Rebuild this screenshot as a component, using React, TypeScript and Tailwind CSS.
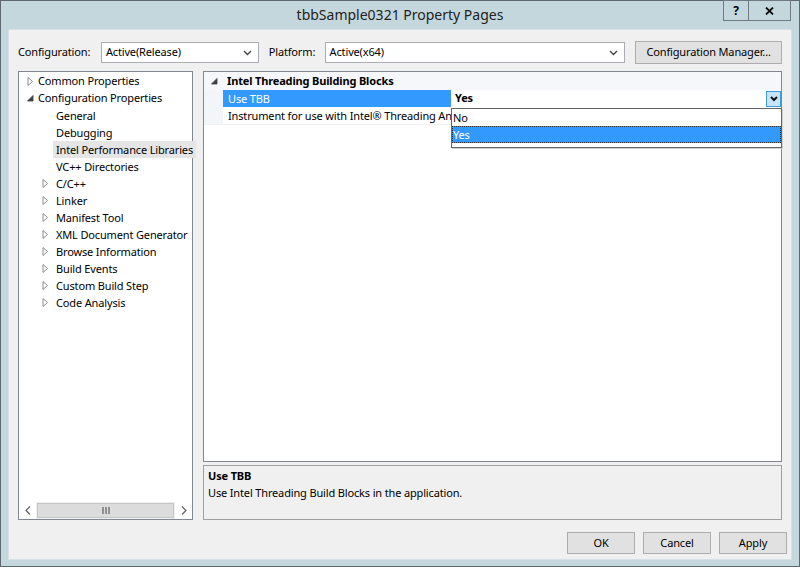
import React from 'react'

const FONT = { fontFamily: '"Noto Sans", "Segoe UI", sans-serif' }

function Chevron({ className = '' }: { className?: string }) {
  return (
    <svg width="9" height="6" viewBox="0 0 9 6" className={className}>
      <path d="M1 1 L4.5 4.5 L8 1" fill="none" stroke="currentColor" strokeWidth="1.4" />
    </svg>
  )
}

function Collapsed() {
  return (
    <svg width="7" height="9" viewBox="0 0 7 9">
      <path d="M1 0.5 L5.5 4.5 L1 8.5 Z" fill="white" stroke="#8c8c8c" strokeWidth="1" />
    </svg>
  )
}

function Expanded() {
  return (
    <svg width="7" height="7" viewBox="0 0 7 7">
      <path d="M6 0.5 L6 6 L0.5 6 Z" fill="#404040" stroke="#404040" strokeWidth="0.8" />
    </svg>
  )
}

const children = [
  { label: 'General', expandable: false },
  { label: 'Debugging', expandable: false },
  { label: 'Intel Performance Libraries', expandable: false, selected: true },
  { label: 'VC++ Directories', expandable: false },
  { label: 'C/C++', expandable: true },
  { label: 'Linker', expandable: true },
  { label: 'Manifest Tool', expandable: true },
  { label: 'XML Document Generator', expandable: true },
  { label: 'Browse Information', expandable: true },
  { label: 'Build Events', expandable: true },
  { label: 'Custom Build Step', expandable: true },
  { label: 'Code Analysis', expandable: true },
]

function Select({ value, width }: { value: string; width: string }) {
  return (
    <div className={`${width} h-[21px] bg-white border border-[#abadb3] flex items-center pl-[4px] pr-[6px]`}>
      <span className="flex-1">{value}</span>
      <Chevron className="text-[#444]" />
    </div>
  )
}

function Button({ label, className = '' }: { label: string; className?: string }) {
  return (
    <div className={`h-[22px] bg-[#e1e1e1] border border-[#adadad] flex items-center justify-center ${className}`}>
      {label}
    </div>
  )
}

export default function App() {
  return (
    <div className="w-[800px] h-[569px] bg-white overflow-hidden text-[11px] tracking-[-0.15px] text-black" style={FONT}>
      <div className="h-[567px] bg-[#c4d7dd] border border-[#5d6873] flex flex-col">
        {/* title bar */}
        <div className="h-[28px] relative flex items-center justify-center shrink-0">
          <span className="text-[14px] tracking-normal text-[#222] mt-[-2px]">tbbSample0321 Property Pages</span>
          <div className="absolute top-[-1px] right-[8px] flex">
            <div className="w-[26px] h-[21px] border border-[#6f7a84] flex items-center justify-center font-bold text-[12px]">?</div>
            <div className="w-[42px] h-[21px] border border-l-0 border-[#6f7a84] flex items-center justify-center">
              <svg width="9" height="8" viewBox="0 0 9 8">
                <path d="M1 0.5 L8 7.5 M8 0.5 L1 7.5" stroke="#111" strokeWidth="1.8" />
              </svg>
            </div>
          </div>
        </div>

        {/* client */}
        <div className="flex-1 mx-[7px] mb-[6px] bg-[#f0f0f0] border border-[#d5e1e5] flex flex-col px-[9px] pt-[11px]">
          {/* config row */}
          <div className="flex items-center h-[23px]">
            <span className="w-[83px]">Configuration:</span>
            <Select value="Active(Release)" width="w-[158px]" />
            <span className="w-[56px] ml-[10px]">Platform:</span>
            <Select value="Active(x64)" width="w-[301px]" />
            <Button label="Configuration Manager..." className="w-[147px] h-[23px] ml-[10px]" />
          </div>

          {/* main */}
          <div className="flex mt-[7px] h-[449px] gap-[10px]">
            {/* tree */}
            <div className="w-[175px] bg-white border border-[#828790] flex flex-col">
              <div className="flex-1 pt-[1px]">
                <div className="h-[17px] flex items-center">
                  <span className="w-[19px] flex justify-center pl-[3px]"><Collapsed /></span>
                  <span>Common Properties</span>
                </div>
                <div className="h-[17px] flex items-center">
                  <span className="w-[19px] flex justify-center pl-[3px]"><Expanded /></span>
                  <span>Configuration Properties</span>
                </div>
                {children.map((c) => (
                  <div key={c.label} className="h-[17px] flex items-center">
                    <span className="w-[34px] flex justify-end pr-[4px] shrink-0">
                      {c.expandable && <Collapsed />}
                    </span>
                    <span className={`whitespace-nowrap px-[3px] h-[17px] leading-[17px] ${c.selected ? 'bg-[#e5e5e5]' : ''}`}>
                      {c.label}
                    </span>
                  </div>
                ))}
              </div>
              {/* h scrollbar */}
              <div className="h-[17px] flex bg-[#f0f0f0] items-stretch">
                <div className="w-[17px] bg-white flex items-center justify-center">
                  <svg width="6" height="9" viewBox="0 0 6 9"><path d="M5 0.5 L1 4.5 L5 8.5" fill="none" stroke="#606060" strokeWidth="1.2" /></svg>
                </div>
                <div className="flex-1 mx-[1px] my-[1px] bg-[#dcdcdc] border border-[#c5c5c5] flex items-center justify-center">
                  <svg width="8" height="7" viewBox="0 0 8 7"><path d="M1 0 V7 M4 0 V7 M7 0 V7" stroke="#606060" strokeWidth="1.2" /></svg>
                </div>
                <div className="w-[17px] bg-white flex items-center justify-center">
                  <svg width="6" height="9" viewBox="0 0 6 9"><path d="M1 0.5 L5 4.5 L1 8.5" fill="none" stroke="#606060" strokeWidth="1.2" /></svg>
                </div>
              </div>
            </div>

            {/* right */}
            <div className="flex-1 flex flex-col gap-[3px]">
              <div className="h-[391px] bg-white border border-[#828790] relative">
                <div className="h-[18px] flex items-center bg-[#f5f7fa]">
                  <span className="w-[19px] flex justify-center pl-[2px]"><Expanded /></span>
                  <span className="font-bold ml-[4px]">Intel Threading Building Blocks</span>
                </div>
                <div className="flex h-[17px]">
                  <div className="w-[19px] bg-[#f3f5f8]" />
                  <div className="w-[228px] bg-[#3399ff] text-white pl-[5px] leading-[17px]">Use TBB</div>
                  <div className="flex-1 bg-white flex items-center pl-[4px]">
                    <span className="font-bold flex-1">Yes</span>
                    <div className="w-[15px] h-[16px] bg-[#c9e3f8] border border-[#3c9bd8] flex items-center justify-center">
                      <svg width="8" height="6" viewBox="0 0 8 6"><path d="M1 1 L4 4 L7 1" fill="none" stroke="#111" strokeWidth="2" /></svg>
                    </div>
                  </div>
                </div>
                <div className="flex h-[18px] border-b border-[#f0f0f0]">
                  <div className="w-[19px] bg-[#f3f5f8]" />
                  <div className="w-[228px] pl-[5px] leading-[18px] whitespace-nowrap overflow-hidden">
                    Instrument for use with Intel® Threading Analysis Tools
                  </div>
                  <div className="flex-1" />
                </div>

                {/* open dropdown list */}
                <div className="absolute left-[247px] top-[36px] w-[331px] h-[40px] bg-white border border-[#646464] shadow-[1px_1px_0_#d0d0d0]">
                  <div className="h-[17px] leading-[17px] pl-[1px]">No</div>
                  <div className="h-[17px] leading-[17px] pl-[1px] bg-[#3399ff] text-white outline-1 outline-dotted outline-[#333] -outline-offset-1">Yes</div>
                </div>
              </div>

              {/* description */}
              <div className="h-[55px] border border-[#a0a0a0] bg-[#f0f0f0] px-[4px] pt-[1px]">
                <div className="font-bold leading-[17px]">Use TBB</div>
                <div className="leading-[17px]">Use Intel Threading Build Blocks in the application.</div>
              </div>
            </div>
          </div>

          {/* buttons */}
          <div className="flex justify-end gap-[8px] mt-[12px] mr-[-5px]">
            <Button label="OK" className="w-[68px]" />
            <Button label="Cancel" className="w-[68px]" />
            <Button label="Apply" className="w-[68px]" />
          </div>
        </div>
      </div>
    </div>
  )
}
